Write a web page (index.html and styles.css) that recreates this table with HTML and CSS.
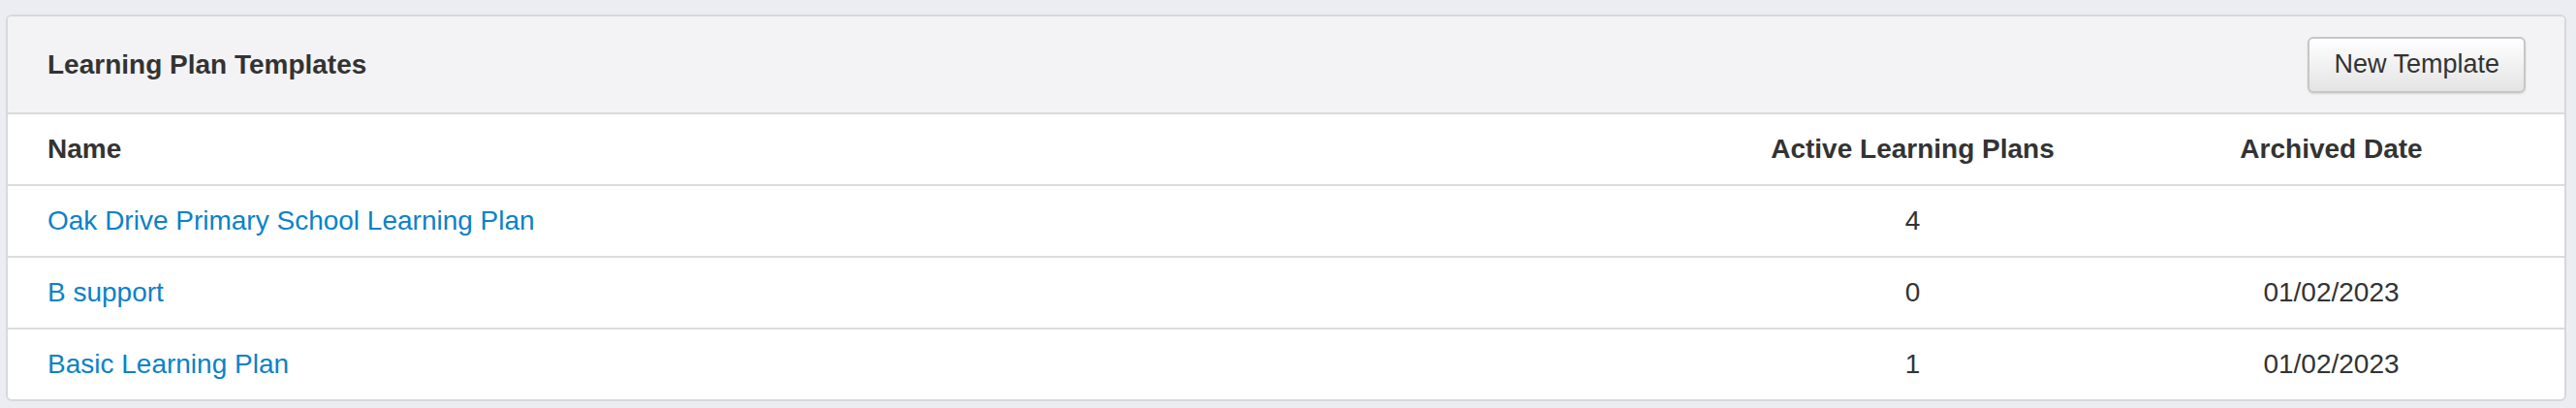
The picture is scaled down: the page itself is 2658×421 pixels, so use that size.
FILE: index.html
```html
<!DOCTYPE html>
<html lang="en">
<head>
<meta charset="utf-8">
<title>Learning Plan Templates</title>
<link rel="stylesheet" href="styles.css">
</head>
<body>
<div class="page">
  <section class="panel">
    <header class="panel-heading">
      <h2 class="panel-title">Learning Plan Templates</h2>
      <button class="btn" type="button">New Template</button>
    </header>
    <table class="grid">
      <colgroup>
        <col class="col-name">
        <col class="col-active">
        <col class="col-archived">
      </colgroup>
      <thead>
        <tr>
          <th class="name">Name</th>
          <th class="center">Active Learning Plans</th>
          <th class="center">Archived Date</th>
        </tr>
      </thead>
      <tbody>
        <tr>
          <td class="name"><a href="#">Oak Drive Primary School Learning Plan</a></td>
          <td class="center">4</td>
          <td class="center"></td>
        </tr>
        <tr>
          <td class="name"><a href="#">B support</a></td>
          <td class="center">0</td>
          <td class="center">01/02/2023</td>
        </tr>
        <tr>
          <td class="name"><a href="#">Basic Learning Plan</a></td>
          <td class="center">1</td>
          <td class="center">01/02/2023</td>
        </tr>
      </tbody>
    </table>
  </section>
</div>
</body>
</html>
```

FILE: styles.css
```css
html, body {
  margin: 0;
  padding: 0;
}

body {
  background: #ecedf2;
  font-family: "Liberation Sans", Arial, sans-serif;
  color: #333333;
}

.page {
  padding: 15px 10px 8px 6px;
}

.panel {
  background: #ffffff;
  border: 2px solid #d8d8da;
  border-radius: 6px;
  overflow: hidden;
}

.panel-heading {
  display: flex;
  align-items: center;
  justify-content: space-between;
  height: 99px;
  padding: 0 40px 0 41px;
  background: #f3f3f5;
  border-bottom: 2px solid #dadadc;
}

.panel-title {
  margin: 0;
  font-size: 28px;
  font-weight: bold;
  color: #333333;
}

.btn {
  box-sizing: border-box;
  height: 58px;
  padding: 0 25px;
  font-family: "Liberation Sans", Arial, sans-serif;
  font-size: 27px;
  color: #333333;
  background: linear-gradient(#ffffff, #e4e4e4);
  border: 2px solid #c6c6c6;
  border-radius: 6px;
  box-shadow: 0 1px 2px rgba(0, 0, 0, 0.12);
}

.grid {
  width: 100%;
  border-collapse: collapse;
  table-layout: fixed;
  font-size: 28px;
}

.col-name { width: 1774px; }
.col-active { width: 383px; }

.grid th,
.grid td {
  height: 72px;
  padding: 0;
  vertical-align: middle;
  text-align: left;
}

.grid th {
  font-weight: bold;
  color: #333333;
}

.grid tbody tr {
  border-top: 2px solid #dcdcde;
}

.grid .name {
  padding-left: 41px;
}

.grid .center {
  text-align: center;
}

.grid a {
  color: #0a82c8;
  text-decoration: none;
}
```
